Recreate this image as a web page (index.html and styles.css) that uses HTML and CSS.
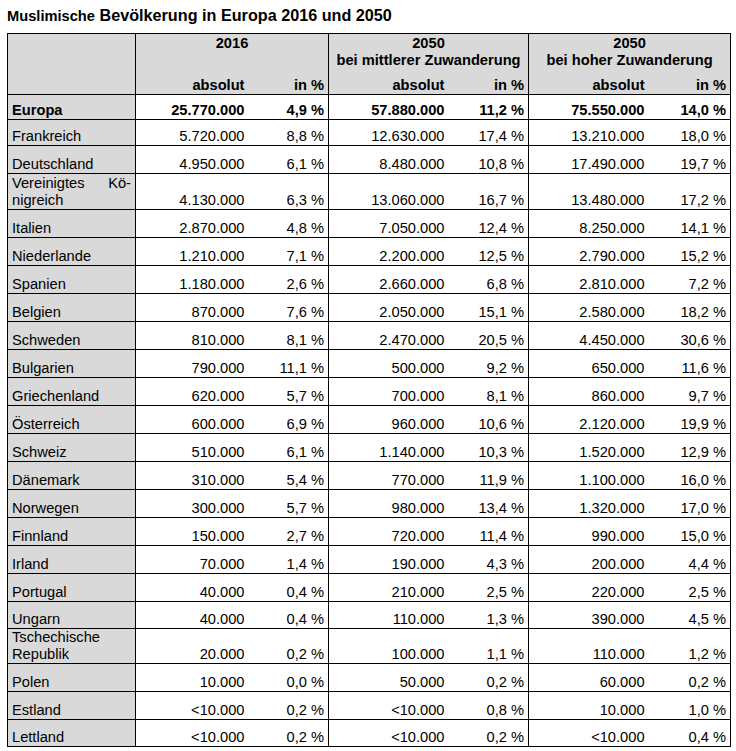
FILE: index.html
```html
<!DOCTYPE html>
<html lang="de">
<head>
<meta charset="utf-8">
<title>Muslimische Bevölkerung in Europa 2016 und 2050</title>
<link rel="stylesheet" href="styles.css">
</head>
<body>
<h1 class="title"><span class="title-small">Muslimische</span> Bevölkerung in Europa 2016 und 2050</h1>
<table class="data">
  <colgroup>
    <col class="c-name">
    <col class="c-abs1">
    <col class="c-pct">
    <col class="c-abs">
    <col class="c-pct">
    <col class="c-abs">
    <col class="c-pct3">
  </colgroup>
  <thead>
    <tr class="hr1">
      <th class="name" rowspan="2"></th>
      <th class="grp" colspan="2">2016</th>
      <th class="grp" colspan="2">2050<br>bei mittlerer Zuwanderung</th>
      <th class="grp" colspan="2">2050<br>bei hoher Zuwanderung</th>
    </tr>
    <tr class="hr2">
      <th class="num">absolut</th>
      <th class="num pct">in %</th>
      <th class="num">absolut</th>
      <th class="num pct">in %</th>
      <th class="num">absolut</th>
      <th class="num pct">in %</th>
    </tr>
  </thead>
  <tbody>
    <tr class="h25 total"><td class="name">Europa</td><td class="num">25.770.000</td><td class="num pct">4,9 %</td><td class="num">57.880.000</td><td class="num pct">11,2 %</td><td class="num">75.550.000</td><td class="num pct">14,0 %</td></tr>
    <tr class="h26"><td class="name">Frankreich</td><td class="num">5.720.000</td><td class="num pct">8,8 %</td><td class="num">12.630.000</td><td class="num pct">17,4 %</td><td class="num">13.210.000</td><td class="num pct">18,0 %</td></tr>
    <tr class="h28"><td class="name">Deutschland</td><td class="num">4.950.000</td><td class="num pct">6,1 %</td><td class="num">8.480.000</td><td class="num pct">10,8 %</td><td class="num">17.490.000</td><td class="num pct">19,7 %</td></tr>
    <tr class="h36 two"><td class="name"><span class="just"><span>Vereinigtes</span><span>Kö-</span></span>nigreich</td><td class="num">4.130.000</td><td class="num pct">6,3 %</td><td class="num">13.060.000</td><td class="num pct">16,7 %</td><td class="num">13.480.000</td><td class="num pct">17,2 %</td></tr>
    <tr class="h28"><td class="name">Italien</td><td class="num">2.870.000</td><td class="num pct">4,8 %</td><td class="num">7.050.000</td><td class="num pct">12,4 %</td><td class="num">8.250.000</td><td class="num pct">14,1 %</td></tr>
    <tr class="h28"><td class="name">Niederlande</td><td class="num">1.210.000</td><td class="num pct">7,1 %</td><td class="num">2.200.000</td><td class="num pct">12,5 %</td><td class="num">2.790.000</td><td class="num pct">15,2 %</td></tr>
    <tr class="h28"><td class="name">Spanien</td><td class="num">1.180.000</td><td class="num pct">2,6 %</td><td class="num">2.660.000</td><td class="num pct">6,8 %</td><td class="num">2.810.000</td><td class="num pct">7,2 %</td></tr>
    <tr class="h28"><td class="name">Belgien</td><td class="num">870.000</td><td class="num pct">7,6 %</td><td class="num">2.050.000</td><td class="num pct">15,1 %</td><td class="num">2.580.000</td><td class="num pct">18,2 %</td></tr>
    <tr class="h28"><td class="name">Schweden</td><td class="num">810.000</td><td class="num pct">8,1 %</td><td class="num">2.470.000</td><td class="num pct">20,5 %</td><td class="num">4.450.000</td><td class="num pct">30,6 %</td></tr>
    <tr class="h28"><td class="name">Bulgarien</td><td class="num">790.000</td><td class="num pct">11,1 %</td><td class="num">500.000</td><td class="num pct">9,2 %</td><td class="num">650.000</td><td class="num pct">11,6 %</td></tr>
    <tr class="h28"><td class="name">Griechenland</td><td class="num">620.000</td><td class="num pct">5,7 %</td><td class="num">700.000</td><td class="num pct">8,1 %</td><td class="num">860.000</td><td class="num pct">9,7 %</td></tr>
    <tr class="h28"><td class="name">Österreich</td><td class="num">600.000</td><td class="num pct">6,9 %</td><td class="num">960.000</td><td class="num pct">10,6 %</td><td class="num">2.120.000</td><td class="num pct">19,9 %</td></tr>
    <tr class="h28"><td class="name">Schweiz</td><td class="num">510.000</td><td class="num pct">6,1 %</td><td class="num">1.140.000</td><td class="num pct">10,3 %</td><td class="num">1.520.000</td><td class="num pct">12,9 %</td></tr>
    <tr class="h28"><td class="name">Dänemark</td><td class="num">310.000</td><td class="num pct">5,4 %</td><td class="num">770.000</td><td class="num pct">11,9 %</td><td class="num">1.100.000</td><td class="num pct">16,0 %</td></tr>
    <tr class="h28"><td class="name">Norwegen</td><td class="num">300.000</td><td class="num pct">5,7 %</td><td class="num">980.000</td><td class="num pct">13,4 %</td><td class="num">1.320.000</td><td class="num pct">17,0 %</td></tr>
    <tr class="h28"><td class="name">Finnland</td><td class="num">150.000</td><td class="num pct">2,7 %</td><td class="num">720.000</td><td class="num pct">11,4 %</td><td class="num">990.000</td><td class="num pct">15,0 %</td></tr>
    <tr class="h28"><td class="name">Irland</td><td class="num">70.000</td><td class="num pct">1,4 %</td><td class="num">190.000</td><td class="num pct">4,3 %</td><td class="num">200.000</td><td class="num pct">4,4 %</td></tr>
    <tr class="h28"><td class="name">Portugal</td><td class="num">40.000</td><td class="num pct">0,4 %</td><td class="num">210.000</td><td class="num pct">2,5 %</td><td class="num">220.000</td><td class="num pct">2,5 %</td></tr>
    <tr class="h27"><td class="name">Ungarn</td><td class="num">40.000</td><td class="num pct">0,4 %</td><td class="num">110.000</td><td class="num pct">1,3 %</td><td class="num">390.000</td><td class="num pct">4,5 %</td></tr>
    <tr class="h35 two"><td class="name">Tschechische Republik</td><td class="num">20.000</td><td class="num pct">0,2 %</td><td class="num">100.000</td><td class="num pct">1,1 %</td><td class="num">110.000</td><td class="num pct">1,2 %</td></tr>
    <tr class="h28"><td class="name">Polen</td><td class="num">10.000</td><td class="num pct">0,0 %</td><td class="num">50.000</td><td class="num pct">0,2 %</td><td class="num">60.000</td><td class="num pct">0,2 %</td></tr>
    <tr class="h28"><td class="name">Estland</td><td class="num">&lt;10.000</td><td class="num pct">0,2 %</td><td class="num">&lt;10.000</td><td class="num pct">0,8 %</td><td class="num">10.000</td><td class="num pct">1,0 %</td></tr>
    <tr class="h27"><td class="name">Lettland</td><td class="num">&lt;10.000</td><td class="num pct">0,2 %</td><td class="num">&lt;10.000</td><td class="num pct">0,2 %</td><td class="num">&lt;10.000</td><td class="num pct">0,4 %</td></tr>
  </tbody>
</table>
</body>
</html>
```

FILE: styles.css
```css
html, body {
  margin: 0;
  padding: 0;
  background: #ffffff;
}
body {
  padding: 6px 7px 0 7px;
  font-family: "Liberation Sans", Arial, sans-serif;
  color: #000000;
}
.title {
  margin: 0;
  height: 27px;
  font-size: 16.2px;
  font-weight: bold;
  line-height: 18px;
  white-space: nowrap;
}
.title-small {
  font-size: 14.67px;
}
.data {
  border-collapse: collapse;
  table-layout: fixed;
  width: 723px;
  font-size: 14.67px;
  line-height: 17px;
}
.c-name { width: 128px; }
.c-abs1 { width: 113px; }
.c-abs { width: 120px; }
.c-pct { width: 80px; }
.c-pct3 { width: 82px; }

.data th,
.data td {
  padding: 0 4px;
  vertical-align: bottom;
  border-top: 1px solid #000;
  border-bottom: 1px solid #000;
}
.data th {
  background: #d9d9d9;
  font-weight: bold;
}
.data .name {
  background: #d9d9d9;
  text-align: left;
  border-left: 1px solid #000;
  border-right: 1px solid #000;
  font-weight: normal;
}
.data .pct {
  border-right: 1px solid #000;
}
.data .num {
  text-align: right;
  white-space: nowrap;
}
.hr1 { height: 37px; }
.hr1 th { border-bottom: none; }
.hr1 .grp {
  text-align: center;
  vertical-align: top;
  line-height: 17px;
  padding-top: 1px;
  border-right: 1px solid #000;
}
.hr2 { height: 24px; }
.hr2 th { border-top: none; }
.total td { font-weight: bold; }
.total .name { font-weight: bold; }
.h25 { height: 25px; }
.h26 { height: 26px; }
.h27 { height: 27px; }
.h28 { height: 28px; }
.h35 { height: 35px; }
.h36 { height: 36px; }
.two td {
  line-height: 17px;
}
.just {
  display: flex;
  justify-content: space-between;
}
```
